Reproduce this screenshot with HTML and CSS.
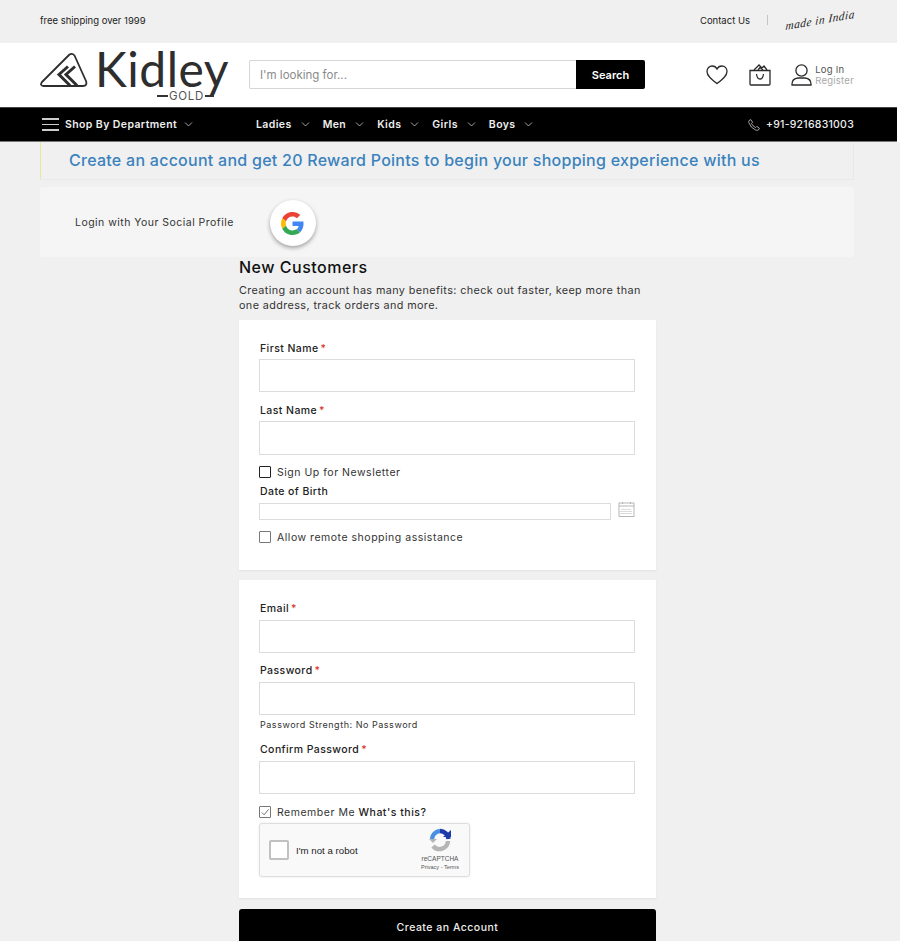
FILE: index.html
```html
<!DOCTYPE html>
<html lang="en">
<head>
    <meta charset="UTF-8">
    <meta name="viewport" content="width=device-width, initial-scale=1.0">
    <title>Create New Customer Account</title>
    <link rel="stylesheet" href="styles.css">
</head>
<body>
    <div class="top">
        <div class="topbar">
            <span class="topbar-text">free shipping over 1999</span>
            <div class="topbar-right">
                <a class="contact">Contact Us</a>
                <span class="topbar-sep"></span>
                <span class="made-in">made in India</span>
            </div>
        </div>

        <header class="header">
            <div class="logo">
                <svg class="logo-mark" width="48" height="36" viewBox="0 0 48 36" fill="none" stroke="#2e2e2e">
                    <path d="M2 30 L29 3 Q32 .5 34.500 3.500 L46 29 Q47.500 34 43 34 L3.500 34 Q-.5 33.500 2 30 Z" stroke-width="1.800" stroke-linejoin="round"/>
                    <path d="M28 14.500 L19 22.500 L30 33.500 M35 14.500 L26 22.500 L37 33.500" stroke-width="3"/>
                </svg>
                <div class="logo-text">
                    <span class="logo-word">Kidley</span>
                    <span class="logo-sub"><i class="logo-dash"></i>GOLD<i class="logo-dash short"></i></span>
                </div>
            </div>
            <form class="search">
                <input class="search-input" type="text" placeholder="I'm looking for...">
                <button class="search-button" type="button">Search</button>
            </form>
            <div class="header-icons">
                <svg class="icon-heart" width="22" height="20" viewBox="0 0 22 20" fill="none" stroke="#2b2b2b" stroke-width="1.300">
                    <path d="M11 18.600 C5 14 1 10.600 1 6.400 C1 3.200 3.400 1 6.200 1 C8.200 1 10 2 11 4 C12 2 13.800 1 15.800 1 C18.600 1 21 3.200 21 6.400 C21 10.600 17 14 11 18.600 Z"/>
                </svg>
                <svg class="icon-bag" width="22" height="22" viewBox="0 0 22 22" fill="none" stroke="#2b2b2b" stroke-width="1.300">
                    <path d="M1 6.500 H21 V20 Q21 21 20 21 H2 Q1 21 1 20 Z"/>
                    <path d="M5 6 L10 1 L13 4 L15 2 L18 6 M9 6 L11 3.500 L14 6"/>
                    <path d="M7.500 10 Q8 15 11 15 Q14 15 14.500 10"/>
                </svg>
                <div class="account">
                    <svg width="21" height="22" viewBox="0 0 21 22" fill="none" stroke="#2b2b2b" stroke-width="1.300">
                        <circle cx="10.500" cy="6.500" r="5.600"/>
                        <path d="M1 21 Q.6 14.600 7 14 H14 Q20.400 14.600 20 21 Z"/>
                    </svg>
                    <div class="account-links">
                        <a class="login">Log In</a>
                        <a class="register">Register</a>
                    </div>
                </div>
            </div>
        </header>

        <nav class="nav">
            <div class="nav-dept">
                <span class="burger"><i></i><i></i><i></i></span>
                <span>Shop By Department</span>
                <svg class="chev" width="9" height="5" viewBox="0 0 9 5"><path d="M1 .5 L4.500 4 L8 .5"/></svg>
            </div>
            <ul class="nav-menu">
                <li>Ladies <svg class="chev" width="9" height="5" viewBox="0 0 9 5"><path d="M1 .5 L4.500 4 L8 .5"/></svg></li>
                <li>Men <svg class="chev" width="9" height="5" viewBox="0 0 9 5"><path d="M1 .5 L4.500 4 L8 .5"/></svg></li>
                <li>Kids <svg class="chev" width="9" height="5" viewBox="0 0 9 5"><path d="M1 .5 L4.500 4 L8 .5"/></svg></li>
                <li>Girls <svg class="chev" width="9" height="5" viewBox="0 0 9 5"><path d="M1 .5 L4.500 4 L8 .5"/></svg></li>
                <li>Boys <svg class="chev" width="9" height="5" viewBox="0 0 9 5"><path d="M1 .5 L4.500 4 L8 .5"/></svg></li>
            </ul>
            <div class="nav-phone">
                <svg width="12" height="12" viewBox="0 0 12 12" fill="none" stroke="#c9c9c9" stroke-width=".8">
                    <path d="M1 1.600 L2.800 .6 L4.600 3.200 L3.400 4.400 Q4.600 7 7.600 8.600 L8.800 7.400 L11.400 9.200 L10.400 11 Q9.400 11.600 7.600 11 Q2.400 8.800 .8 3.600 Q.6 2.400 1 1.600 Z"/>
                </svg>
                <span>+91-9216831003</span>
            </div>
        </nav>
    </div>

    <main class="content">
        <div class="notice">Create an account and get 20 Reward Points to begin your shopping experience with us</div>

        <div class="social">
            <span>Login with Your Social Profile</span>
            <a class="google">
                <svg width="23" height="23" viewBox="0 0 48 48">
                    <path fill="#EA4335" d="M24 9.500c3.500 0 6.700 1.200 9.200 3.600l6.900-6.900C35.900 2.400 30.500 0 24 0 14.600 0 6.500 5.400 2.600 13.200l8 6.200C12.500 13.700 17.800 9.500 24 9.500z"/>
                    <path fill="#4285F4" d="M47 24.500c0-1.600-.1-3.100-.4-4.500H24v9h12.900c-.6 3-2.200 5.500-4.700 7.200l7.700 6C44.400 37.600 47 31.600 47 24.500z"/>
                    <path fill="#FBBC05" d="M10.500 28.600c-.5-1.500-.8-3-.8-4.600s.3-3.100.8-4.600l-8-6.200C.9 16.500 0 20.100 0 24s.9 7.500 2.600 10.800l7.900-6.200z"/>
                    <path fill="#34A853" d="M24 48c6.500 0 11.900-2.100 15.900-5.800l-7.700-6c-2.200 1.400-4.900 2.300-8.200 2.300-6.200 0-11.500-4.200-13.400-9.900l-8 6.200C6.500 42.600 14.600 48 24 48z"/>
                </svg>
            </a>
        </div>

        <section class="register-col">
            <h2 class="title">New Customers</h2>
            <p class="intro">Creating an account has many benefits: check out faster, keep more than one address, track orders and more.</p>

            <form>
                <div class="card card-personal">
                    <div class="field">
                        <label class="label">First Name<em>*</em></label>
                        <input class="input" type="text">
                    </div>
                    <div class="field field-last">
                        <label class="label">Last Name<em>*</em></label>
                        <input class="input tall" type="text">
                    </div>
                    <label class="check"><span class="box dark"></span>Sign Up for Newsletter</label>
                    <label class="label dob-label">Date of Birth</label>
                    <div class="dob-row">
                        <input class="input dob" type="text">
                        <svg class="calendar" width="17" height="15" viewBox="0 0 16 15" fill="none" stroke="#a5a5a5" stroke-width=".8">
                            <rect x=".5" y="1" width="15" height="13.500"/>
                            <path d="M.5 4 H15.500"/>
                            <path d="M4 .2 V2 M12 .2 V2"/>
                            <path d="M3 7.500 H13 M2 9.500 H14 M2 11.500 H14" stroke-dasharray="1 1"/>
                        </svg>
                    </div>
                    <label class="check"><span class="box"></span>Allow remote shopping assistance</label>
                </div>

                <div class="card card-login">
                    <div class="field">
                        <label class="label">Email<em>*</em></label>
                        <input class="input" type="text">
                    </div>
                    <div class="field field-pass">
                        <label class="label">Password<em>*</em></label>
                        <input class="input" type="password">
                        <div class="strength">Password Strength: No Password</div>
                    </div>
                    <div class="field field-confirm">
                        <label class="label">Confirm Password<em>*</em></label>
                        <input class="input" type="password">
                    </div>
                    <label class="check remember">
                        <span class="box">
                            <svg width="11" height="11" viewBox="0 0 11 11" fill="none" stroke="#555" stroke-width=".9"><path d="M2 5.500 L4.500 8 L9.500 2"/></svg>
                        </span>
                        Remember Me&nbsp;<b>What's this?</b>
                    </label>
                    <div class="captcha">
                        <span class="captcha-box"></span>
                        <span class="captcha-text">I'm not a robot</span>
                        <div class="captcha-brand">
                            <svg width="24" height="24" viewBox="0 0 24 24" fill="none" stroke-width="4.400">
                                <path d="M4 11 A8.500 8.500 0 0 1 12 3" stroke="#4a90e2"/>
                                <path d="M12 3 A8.500 8.500 0 0 1 20.500 11" stroke="#1c3aa9"/>
                                <path d="M20 13 A8.500 8.500 0 0 1 5 18" stroke="#b5b5b5"/>
                                <path d="M1 11 H9 L5 15 Z" fill="#b5b5b5" stroke="none"/>
                                <path d="M15 9 L23 9 L23 2 Z" fill="#1c3aa9" stroke="none"/>
                            </svg>
                            <span class="captcha-name">reCAPTCHA</span>
                            <span class="captcha-links">Privacy - Terms</span>
                        </div>
                    </div>
                </div>

                <button class="submit" type="button">Create an Account</button>
            </form>
        </section>
    </main>
</body>
</html>
```

FILE: styles.css
```css
* {
    box-sizing: border-box;
}
html, body {
    margin: 0;
    padding: 0;
    height: 100vh;
    overflow: hidden;
    background: #f0f0f0;
}
body {
    font-family: Inter, "Open Sans", sans-serif;
    color: #333;
}
a {
    color: inherit;
}

/* the header rows stop 3px short of the window, white shows in the gap */
.top {
    padding-right: 3px;
    background: #fff;
}

/* top bar */
.topbar {
    height: 43px;
    padding: 0 43px 3px 40px;
    display: flex;
    align-items: center;
    justify-content: space-between;
    background: #f0f0f0;
    font-size: 9.500px;
    color: #222;
}
.topbar-right {
    display: flex;
    align-items: center;
}
.topbar-sep {
    width: 1px;
    height: 10px;
    margin: 0 17px;
    background: #c4c4c4;
}
.made-in {
    width: 69px;
    font-family: "Liberation Serif", serif;
    font-style: italic;
    font-size: 11.500px;
    letter-spacing: .5px;
    white-space: nowrap;
    color: #222;
    transform: rotate(-10deg) skewX(-14deg);
}

/* header */
.header {
    height: 64px;
    padding: 0 43px 0 40px;
    display: flex;
    align-items: center;
    background: #fff;
}
.logo {
    width: 209px;
    display: flex;
    align-items: flex-start;
}
.logo-mark {
    margin-top: 3px;
    margin-right: 7px;
    flex: none;
}
.logo-text {
    display: flex;
    flex-direction: column;
    align-items: flex-end;
    color: #2e2e2e;
}
.logo-word {
    font-family: Lato, sans-serif;
    font-size: 48px;
    line-height: 40px;
    letter-spacing: .5px;
}
.logo-sub {
    display: flex;
    align-items: center;
    gap: 1px;
    margin-top: 2px;
    margin-right: 15px;
    font-size: 11.500px;
    line-height: 11px;
    letter-spacing: .7px;
    color: #555;
}
.logo-dash {
    width: 11px;
    height: 1.500px;
    background: #333;
}
.logo-dash.short {
    width: 9px;
}
.search {
    width: 396px;
    height: 29px;
    margin-top: -1px;
    display: flex;
}
.search-input {
    flex: 1;
    min-width: 0;
    padding: 0 10px;
    border: 1px solid #d6d6d6;
    border-right: none;
    border-radius: 2px 0 0 2px;
    font-family: inherit;
    font-size: 11.500px;
    outline: none;
}
.search-input::placeholder {
    color: #8a8a8a;
}
.search-button {
    width: 69px;
    border: none;
    border-radius: 0 2px 2px 0;
    background: #000;
    color: #fff;
    font-family: inherit;
    font-size: 11px;
    font-weight: 600;
}
.header-icons {
    margin-left: auto;
    display: flex;
    align-items: center;
}
.icon-heart {
    margin-right: 20.500px;
}
.icon-bag {
    margin-right: 20.500px;
}
.account {
    display: flex;
    align-items: center;
    gap: 3px;
}
.account-links {
    display: flex;
    flex-direction: column;
    font-size: 9.500px;
    line-height: 11px;
    letter-spacing: .25px;
}
.login {
    color: #555;
}
.register {
    color: #a8a8a8;
}

/* nav */
.nav {
    height: 35px;
    padding: 0 43px 0 42px;
    display: flex;
    align-items: center;
    background: #000;
    border-top: 1px solid #444;
    border-bottom: 1px solid #777;
    color: #eee;
    font-size: 10.500px;
    font-weight: 600;
    letter-spacing: .4px;
}
.nav-dept {
    width: 214px;
    display: flex;
    align-items: center;
}
.burger {
    width: 17px;
    margin-right: 6px;
    display: flex;
    flex-direction: column;
    gap: 4px;
}
.burger i {
    height: 1.500px;
    background: #ccc;
}
.nav-dept .chev {
    margin-left: 7px;
}
.chev {
    fill: none;
    stroke: #ccc;
    stroke-width: .8;
}
.nav-menu {
    list-style: none;
    margin: 0;
    padding: 0;
    display: flex;
    gap: 13px;
}
.nav-menu li {
    display: flex;
    align-items: center;
    gap: 9px;
}
.nav-phone {
    margin-left: auto;
    display: flex;
    align-items: center;
    gap: 6px;
    font-weight: 500;
    letter-spacing: .25px;
}

/* page content */
.content {
    width: 897px;
    padding: 0 43px 0 40px;
}
.notice {
    height: 38px;
    margin-bottom: 7px;
    padding: 0 0 2px 28px;
    display: flex;
    align-items: center;
    border-left: 1px solid #e8e6a0;
    border-right: 1px solid #e9e9e9;
    border-bottom: 1px solid #e9e9e9;
    font-size: 16px;
    font-weight: 500;
    letter-spacing: .26px;
    color: #3a82bd;
    white-space: nowrap;
}
.social {
    height: 70px;
    padding: 0 35px;
    display: flex;
    align-items: center;
    gap: 36px;
    border-radius: 3px;
    background: #f5f5f5;
    font-size: 10.500px;
    letter-spacing: .47px;
    color: #333;
}
.google {
    width: 46px;
    height: 46px;
    margin-top: 2px;
    display: flex;
    align-items: center;
    justify-content: center;
    border-radius: 50%;
    background: #fff;
    box-shadow: 0 2px 4px rgba(0, 0, 0, .35);
}
.register-col {
    width: 417px;
    margin-left: 199px;
}
.title {
    margin: 0;
    font-size: 16px;
    line-height: 20px;
    font-weight: 500;
    letter-spacing: .5px;
    color: #111;
}
.intro {
    margin: 6px 0 7px;
    font-size: 10.800px;
    line-height: 15px;
    letter-spacing: .4px;
    color: #333;
}
.card {
    padding: 19px 21px 0 20px;
    margin-bottom: 10px;
    background: #fff;
    box-shadow: 0 1px 2px rgba(0, 0, 0, .06);
}
.card-personal {
    height: 250px;
}
.card-login {
    height: 318px;
}
.field {
    margin-bottom: 9px;
}
.field-last {
    margin-bottom: 8px;
}
.label {
    display: block;
    height: 20px;
    padding-left: 1px;
    font-size: 10.500px;
    line-height: 19px;
    font-weight: 500;
    letter-spacing: .42px;
    color: #222;
}
.label em {
    margin-left: 2px;
    font-style: normal;
    color: #d9372c;
}
.input {
    display: block;
    width: 100%;
    height: 33px;
    padding: 0 9px;
    border: 1px solid #dcdcdc;
    background: #fff;
    outline: none;
}
.input.tall {
    height: 34px;
}
.check {
    height: 18px;
    display: flex;
    align-items: center;
    font-size: 10.500px;
    letter-spacing: .52px;
    color: #333;
    white-space: nowrap;
}
.check b {
    font-weight: 500;
    color: #222;
}
.box {
    width: 12px;
    height: 12px;
    margin-right: 6px;
    display: flex;
    align-items: center;
    justify-content: center;
    border: 1px solid #777;
    border-radius: 1px;
    background: #fff;
}
.box.dark {
    border-color: #222;
}
.dob-label {
    height: 22px;
    line-height: 21px;
}
.dob-row {
    height: 17px;
    margin-bottom: 8px;
    display: flex;
    align-items: center;
    justify-content: space-between;
}
.input.dob {
    width: 352px;
    height: 17px;
}
.calendar {
    margin-top: -4px;
}
.card-login .label {
    height: 21px;
}
.card-login .field {
    margin-bottom: 8px;
}
.card-login .field-pass {
    margin-bottom: 5px;
}
.card-login .field-confirm {
    margin-bottom: 9px;
}
.strength {
    height: 20px;
    padding-left: 1px;
    font-size: 9px;
    line-height: 19px;
    letter-spacing: .53px;
    color: #333;
}
.remember {
    margin-bottom: 2px;
}
.captcha {
    width: 211px;
    height: 54px;
    padding-left: 9px;
    display: flex;
    align-items: center;
    border: 1px solid #dedede;
    border-radius: 3px;
    background: #f9f9f9;
    box-shadow: 0 0 3px rgba(0, 0, 0, .08);
    font-family: "Liberation Sans", sans-serif;
}
.captcha-box {
    width: 20px;
    height: 20px;
    border: 2px solid #c1c1c1;
    border-radius: 2px;
    background: #fff;
}
.captcha-text {
    margin-left: 7px;
    font-size: 9.700px;
    color: #222;
}
.captcha-brand {
    margin-left: auto;
    width: 58px;
    display: flex;
    flex-direction: column;
    align-items: center;
    color: #555;
}
.captcha-name {
    margin-top: 2px;
    font-size: 6.500px;
    line-height: 9px;
}
.captcha-links {
    font-size: 5.500px;
    line-height: 9px;
}
.submit {
    display: block;
    width: 100%;
    height: 36px;
    margin-top: 11px;
    border: none;
    border-radius: 3px 3px 0 0;
    background: #000;
    color: #eee;
    font-family: inherit;
    font-size: 10.500px;
    font-weight: 500;
    letter-spacing: .5px;
}
```
